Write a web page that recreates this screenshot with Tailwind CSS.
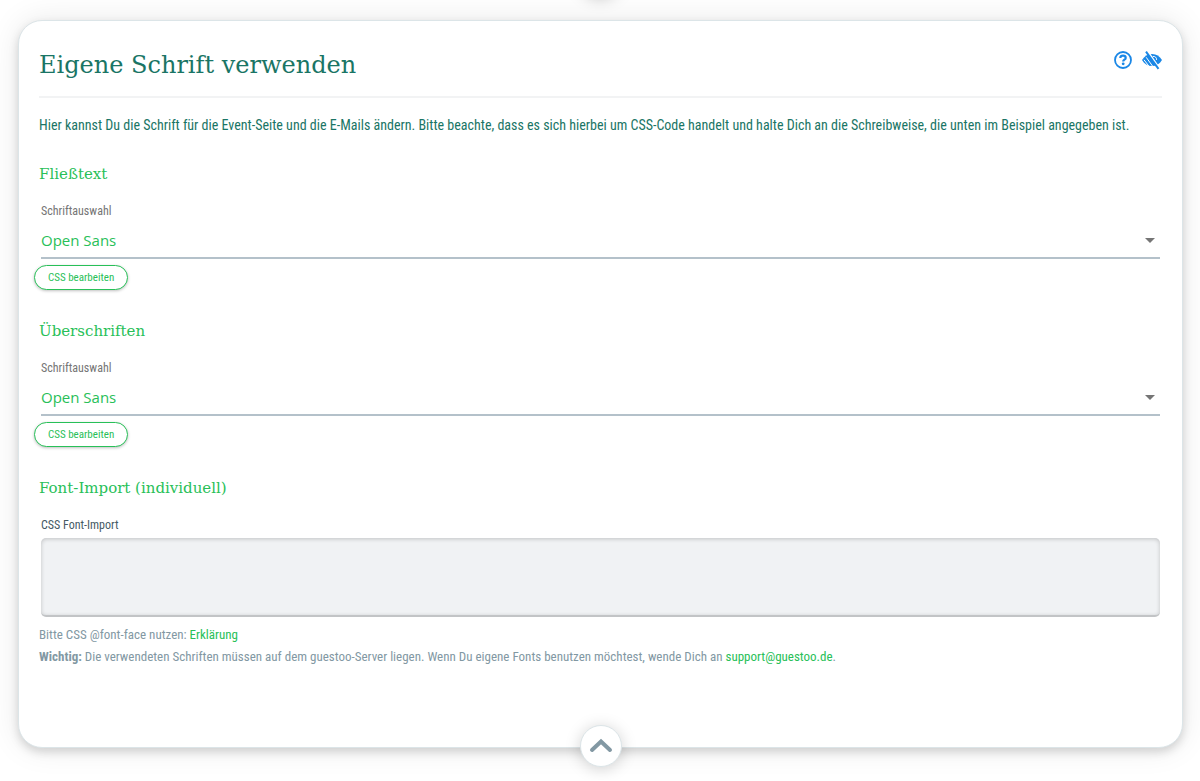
<!DOCTYPE html>
<html lang="de">
<head>
<meta charset="utf-8">
<meta name="viewport" content="width=device-width, initial-scale=1">
<title>Eigene Schrift verwenden</title>
<script src="https://cdn.jsdelivr.net/npm/@tailwindcss/browser@4"></script>
</head>
<body class="bg-white overflow-x-hidden font-['Roboto_Condensed','Liberation_Sans_Narrow','Roboto',sans-serif] text-sm text-[#1a7565]">
<div class="relative">
<div class="absolute left-1/2 -top-11 size-10 -translate-x-1/2 rounded-full bg-white shadow-[0_2px_16px_rgba(0,0,0,0.25)]"></div>
<main class="pt-5 pr-[17px] pb-8 pl-[18px]">
<section class="relative rounded-[24px] border border-[#dce5e8] bg-white px-5 pt-[25px] pb-[79px] shadow-[0_4px_10px_rgba(0,0,0,0.15),0_0_32px_rgba(0,0,0,0.09)]">
  <header class="flex items-start justify-between border-b-2 border-[#f2f3f4] pb-3">
    <h1 class="font-['Roboto_Slab','DejaVu_Serif',serif] text-2xl leading-[38px]">Eigene Schrift verwenden</h1>
    <div class="flex gap-2 pt-1 text-[#1a87e6]">
      <button type="button" aria-label="Hilfe" class="size-5">
        <svg viewBox="0 0 20 20" class="size-5" fill="none" stroke="currentColor"><circle cx="11" cy="10" r="8" stroke-width="1.8"/><path d="M8.300 8C8.400 6.400 9.500 5.700 11 5.700s2.700.9 2.700 2.200c0 1.800-2.500 1.800-2.500 3.500" stroke-width="2.200"/><circle cx="11.200" cy="13.800" r="1.400" fill="currentColor" stroke="none"/></svg>
      </button>
      <button type="button" aria-label="Ausblenden" class="h-5 w-[22px]">
        <svg viewBox="0 0 22 20" class="h-5 w-[22px]" fill="currentColor"><path d="M2 10C4.500 6 7.500 3.900 12 3.900S19.500 6 22 10c-2.500 4-5.500 6.100-10 6.100S4.500 14 2 10z"/><path d="M12.800 6.500c2-.6 4 1 3.800 3.400M6.200 7.300l6.500 9M4 9.800l5 6.500" fill="none" stroke="#fff" stroke-width="1"/><path d="M7.600 1.300l12 17.500" stroke="#fff" stroke-width="2"/><path d="M6 1.600l12.500 17.300" stroke="currentColor" stroke-width="2"/></svg>
      </button>
    </div>
  </header>
  <p class="mt-[15px] leading-6">Hier kannst Du die Schrift für die Event-Seite und die E-Mails ändern. Bitte beachte, dass es sich hierbei um CSS-Code handelt und halte Dich an die Schreibweise, die unten im Beispiel angegeben ist.</p>

  <section class="mt-[25px]">
    <h2 class="font-['Roboto_Slab','DejaVu_Serif',serif] text-[15px] leading-6 text-[#28c058]">Fließtext</h2>
    <label for="body-font" class="mt-[15px] ml-0.5 block text-xs leading-5 text-[#757575]">Schriftauswahl</label>
    <div class="relative mx-0.5 mt-1">
      <select id="body-font" class="block h-[34px] w-full appearance-none border-b-2 border-[#b4c1ca] bg-transparent font-['Open_Sans',sans-serif] text-[15px] text-[#28c058]"><option>Open Sans</option></select>
      <svg viewBox="0 0 10 5" class="pointer-events-none absolute top-[13px] right-[5px] h-[5px] w-[10px]" fill="#757575"><path d="M0 0h10L5 5z"/></svg>
    </div>
    <button type="button" class="mt-[6px] -ml-[5px] block h-[25px] rounded-full border border-[#28c058] bg-white px-[13px] text-[11px] text-[#28c058] shadow-[0_1px_3px_rgba(0,0,0,0.25)]">CSS bearbeiten</button>
  </section>

  <section class="mt-[29px]">
    <h2 class="font-['Roboto_Slab','DejaVu_Serif',serif] text-[15px] leading-6 text-[#28c058]">Überschriften</h2>
    <label for="heading-font" class="mt-[15px] ml-0.5 block text-xs leading-5 text-[#757575]">Schriftauswahl</label>
    <div class="relative mx-0.5 mt-1">
      <select id="heading-font" class="block h-[34px] w-full appearance-none border-b-2 border-[#b4c1ca] bg-transparent font-['Open_Sans',sans-serif] text-[15px] text-[#28c058]"><option>Open Sans</option></select>
      <svg viewBox="0 0 10 5" class="pointer-events-none absolute top-[13px] right-[5px] h-[5px] w-[10px]" fill="#757575"><path d="M0 0h10L5 5z"/></svg>
    </div>
    <button type="button" class="mt-[6px] -ml-[5px] block h-[25px] rounded-full border border-[#28c058] bg-white px-[13px] text-[11px] text-[#28c058] shadow-[0_1px_3px_rgba(0,0,0,0.25)]">CSS bearbeiten</button>
  </section>

  <section class="mt-[29px]">
    <h2 class="font-['Roboto_Slab','DejaVu_Serif',serif] text-[15px] leading-6 text-[#28c058]">Font-Import (individuell)</h2>
    <label for="font-import" class="mt-[15px] ml-0.5 block text-xs leading-5 text-[#455a64]">CSS Font-Import</label>
    <div class="mx-0.5 mt-[3px]">
      <textarea id="font-import" class="block h-[79px] w-full resize-none rounded-[5px] border-b-2 border-[#c2c4c6] bg-[#f0f2f4] p-2 shadow-[inset_0_1px_4px_rgba(0,0,0,0.2)]"></textarea>
    </div>
    <div class="mt-[7px] text-[13px] leading-[22px] text-[#8298a3]">
      <p>Bitte CSS @font-face nutzen: <a href="#" class="text-[#28c058]">Erklärung</a></p>
      <p><strong>Wichtig:</strong> Die verwendeten Schriften müssen auf dem guestoo-Server liegen. Wenn Du eigene Fonts benutzen möchtest, wende Dich an <a href="mailto:support@guestoo.de" class="text-[#28c058]">support@guestoo.de</a>.</p>
    </div>
  </section>

  <button type="button" aria-label="Einklappen" class="absolute -bottom-5 left-1/2 flex size-[42px] -translate-x-1/2 items-center justify-center rounded-full border border-[#dce5e8] bg-white text-[#8298a3] shadow-[0_2px_16px_rgba(0,0,0,0.18)]">
    <svg viewBox="0 0 24 16" class="h-4 w-6" fill="none" stroke="currentColor" stroke-width="4" stroke-linecap="round" stroke-linejoin="miter"><path d="M3 12l9-8.500 9 8.500"/></svg>
  </button>
</section>
</main>
</div>
</body>
</html>
